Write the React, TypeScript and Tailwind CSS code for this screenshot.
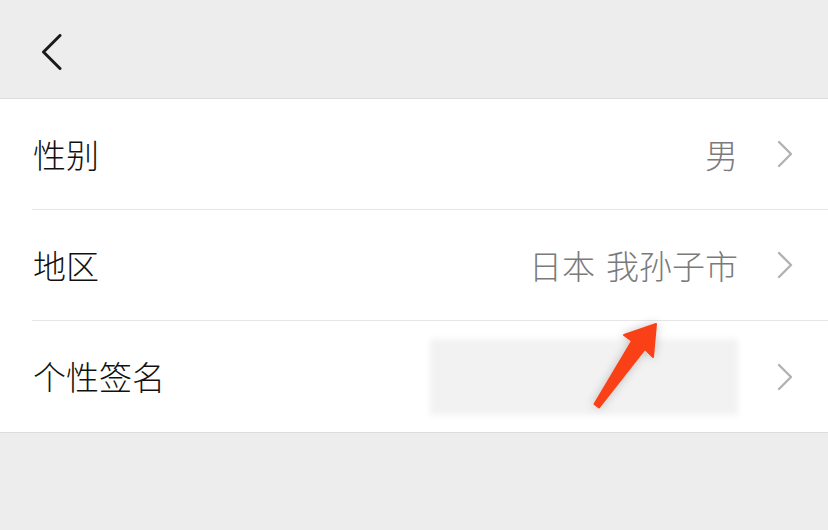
import React from "react";

type Row = {
  label: string;
  value?: string[];
  redacted?: boolean;
};

const rows: Row[] = [
  { label: "性别", value: ["男"] },
  { label: "地区", value: ["日本", "我孙子市"] },
  { label: "个性签名", redacted: true },
];

function Chevron({ className }: { className?: string }) {
  return (
    <svg width="16" height="28" viewBox="0 0 16 28" className={className} fill="none">
      <path d="M2 2 L14 14 L2 26" stroke="currentColor" strokeWidth="2.4" strokeLinecap="round" strokeLinejoin="round" />
    </svg>
  );
}

export default function App() {
  return (
    <div
      className="relative h-[530px] w-[828px] overflow-hidden bg-[#ededed]"
      style={{ fontFamily: '"Noto Sans CJK SC", "Noto Sans", sans-serif' }}
    >
      <header className="flex h-[99px] items-start border-b border-[#dedede] bg-[#ededed] pl-[41px] pt-[34px]">
        <svg width="22" height="36" viewBox="0 0 22 36" fill="none">
          <path d="M19 1.5 L2.5 18 L19 34.5" stroke="#1a1a1a" strokeWidth="3" strokeLinecap="round" strokeLinejoin="round" />
        </svg>
      </header>

      <div className="border-b border-[#dcdcdc] bg-white">
        {rows.map((row, i) => (
          <div
            key={row.label}
            className={
              i < rows.length - 1
                ? "ml-[32px] flex h-[111px] items-center border-b border-[#e6e6e6] pl-[1px] pr-[35px]"
                : "ml-[32px] flex h-[111px] items-center pl-[1px] pr-[35px]"
            }
          >
            <span className="text-[33px] font-light leading-none text-[#111111]">{row.label}</span>
            <div className="flex flex-1 justify-end">
              {row.redacted ? (
                <div className="h-[76px] w-[308px] bg-[#f2f2f2] blur-[3px]" />
              ) : (
                <span className="flex gap-[11px] text-[33px] font-light leading-none text-[#7a7a7a]">
                  {row.value!.map((w) => (
                    <span key={w}>{w}</span>
                  ))}
                </span>
              )}
            </div>
            <Chevron className="ml-[39px] text-[#b2b2b2]" />
          </div>
        ))}
      </div>

      {/* annotation arrow */}
      <svg className="pointer-events-none absolute left-0 top-0" width="828" height="530" viewBox="0 0 828 530">
        <defs>
          <filter id="sh" x="-50%" y="-50%" width="200%" height="200%">
            <feDropShadow dx="0" dy="0" stdDeviation="5" floodColor="#000" floodOpacity="0.22" />
          </filter>
        </defs>
        <polygon
          points="594.5,404 632,341 624,335 656,324 653,357 645,349 599,407.5"
          fill="#fa4116"
          stroke="#fa4116"
          strokeWidth="2"
          strokeLinejoin="round"
          filter="url(#sh)"
        />
      </svg>
    </div>
  );
}
